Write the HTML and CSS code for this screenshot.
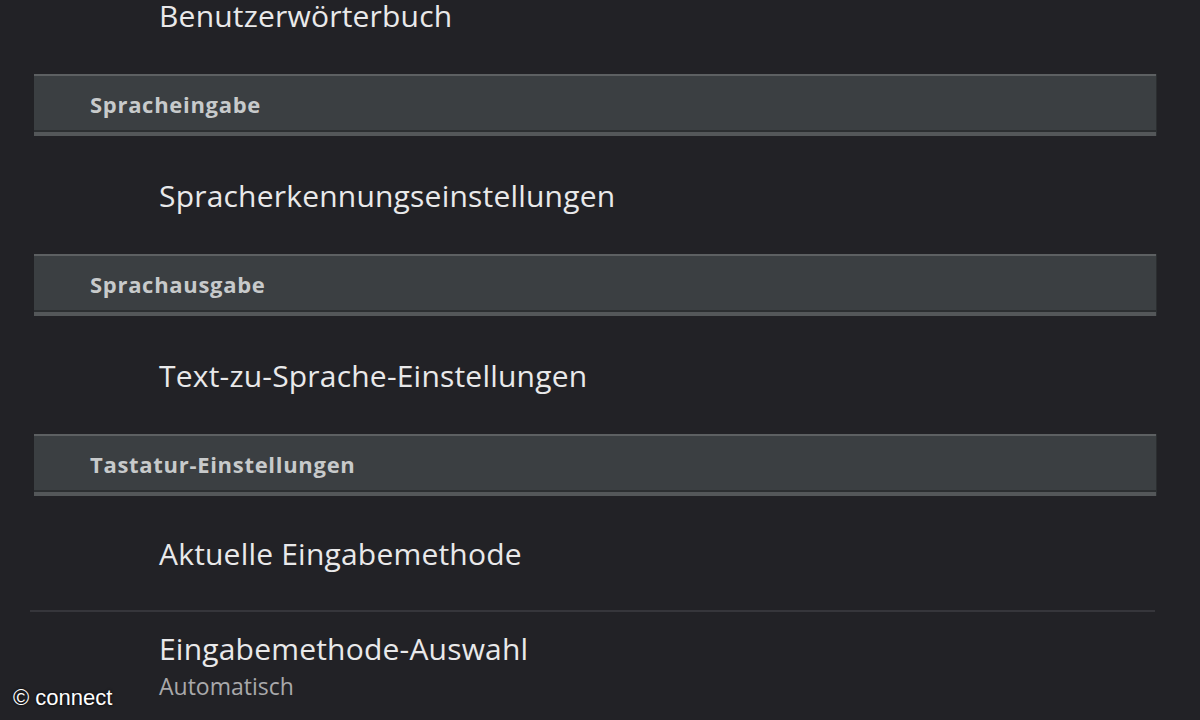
FILE: index.html
```html
<!DOCTYPE html>
<html lang="de">
<head>
  <meta charset="UTF-8">
  <title>Sprache &amp; Eingabe</title>
  <link rel="stylesheet" href="styles.css">
</head>
<body>

  <!-- Settings list -->
  <div class="settings">
    <div class="item item-first">Benutzerwörterbuch</div>

    <div class="category">Spracheingabe</div>
    <div class="item">Spracherkennungseinstellungen</div>

    <div class="category">Sprachausgabe</div>
    <div class="item">Text-zu-Sprache-Einstellungen</div>

    <div class="category">Tastatur-Einstellungen</div>
    <div class="item item-short">Aktuelle Eingabemethode</div>
    <div class="divider"></div>
    <div class="item item-sub">
      <span class="title">Eingabemethode-Auswahl</span>
      <span class="summary">Automatisch</span>
    </div>
  </div>

  <!-- Watermark -->
  <div class="watermark">© connect</div>

</body>
</html>
```

FILE: styles.css
```css
/*--------------------------------------------------------------
# Global
--------------------------------------------------------------*/
* {
  margin: 0;
  padding: 0;
  box-sizing: border-box;
}

body {
  width: 1200px;
  height: 720px;
  overflow: hidden;
  background: #222226;
  font-family: "Open Sans", "DejaVu Sans", sans-serif;
  position: relative;
}

/*--------------------------------------------------------------
# Settings list
--------------------------------------------------------------*/
.settings {
  display: flex;
  flex-direction: column;
  padding: 0 44px 0 34px;
}

.item {
  height: 118px;
  display: flex;
  flex-direction: column;
  justify-content: center;
  padding-left: 125px;
  color: #e9e9ea;
  font-size: 30px;
  letter-spacing: 0.2px;
  line-height: 41px;
}

/* list is scrolled, only the end of the first row shows */
.item-first {
  height: 74px;
  justify-content: flex-start;
  line-height: 32px;
}

.item-short {
  height: 114px;
}

.item-sub {
  height: 110px;
  justify-content: flex-start;
  padding-top: 16px;
}

.item-sub .summary {
  font-size: 23px;
  line-height: 31px;
  letter-spacing: 0;
  margin-top: 2px;
  color: #a9a9ab;
}

/* Category header bar */
.category {
  height: 62px;
  display: flex;
  align-items: center;
  padding-left: 56px;
  background: #3b3f42;
  border-top: 2px solid #5d6062;
  border-bottom: 4px solid #545759;
  box-shadow: inset 0 -2px 0 #2c2f31, 1px 0 0 #2b2e30;
  color: #c7cacb;
  font-size: 22px;
  font-weight: bold;
  letter-spacing: 0.7px;
}

.divider {
  height: 2px;
  margin: 0 1px 0 -4px;
  background: #36363b;
}

/*--------------------------------------------------------------
# Watermark
--------------------------------------------------------------*/
.watermark {
  position: absolute;
  left: 13px;
  bottom: 9px;
  color: #ffffff;
  font-family: "Liberation Sans", Arial, sans-serif;
  font-size: 22px;
  text-shadow: 0 0 3px #000;
}
```
